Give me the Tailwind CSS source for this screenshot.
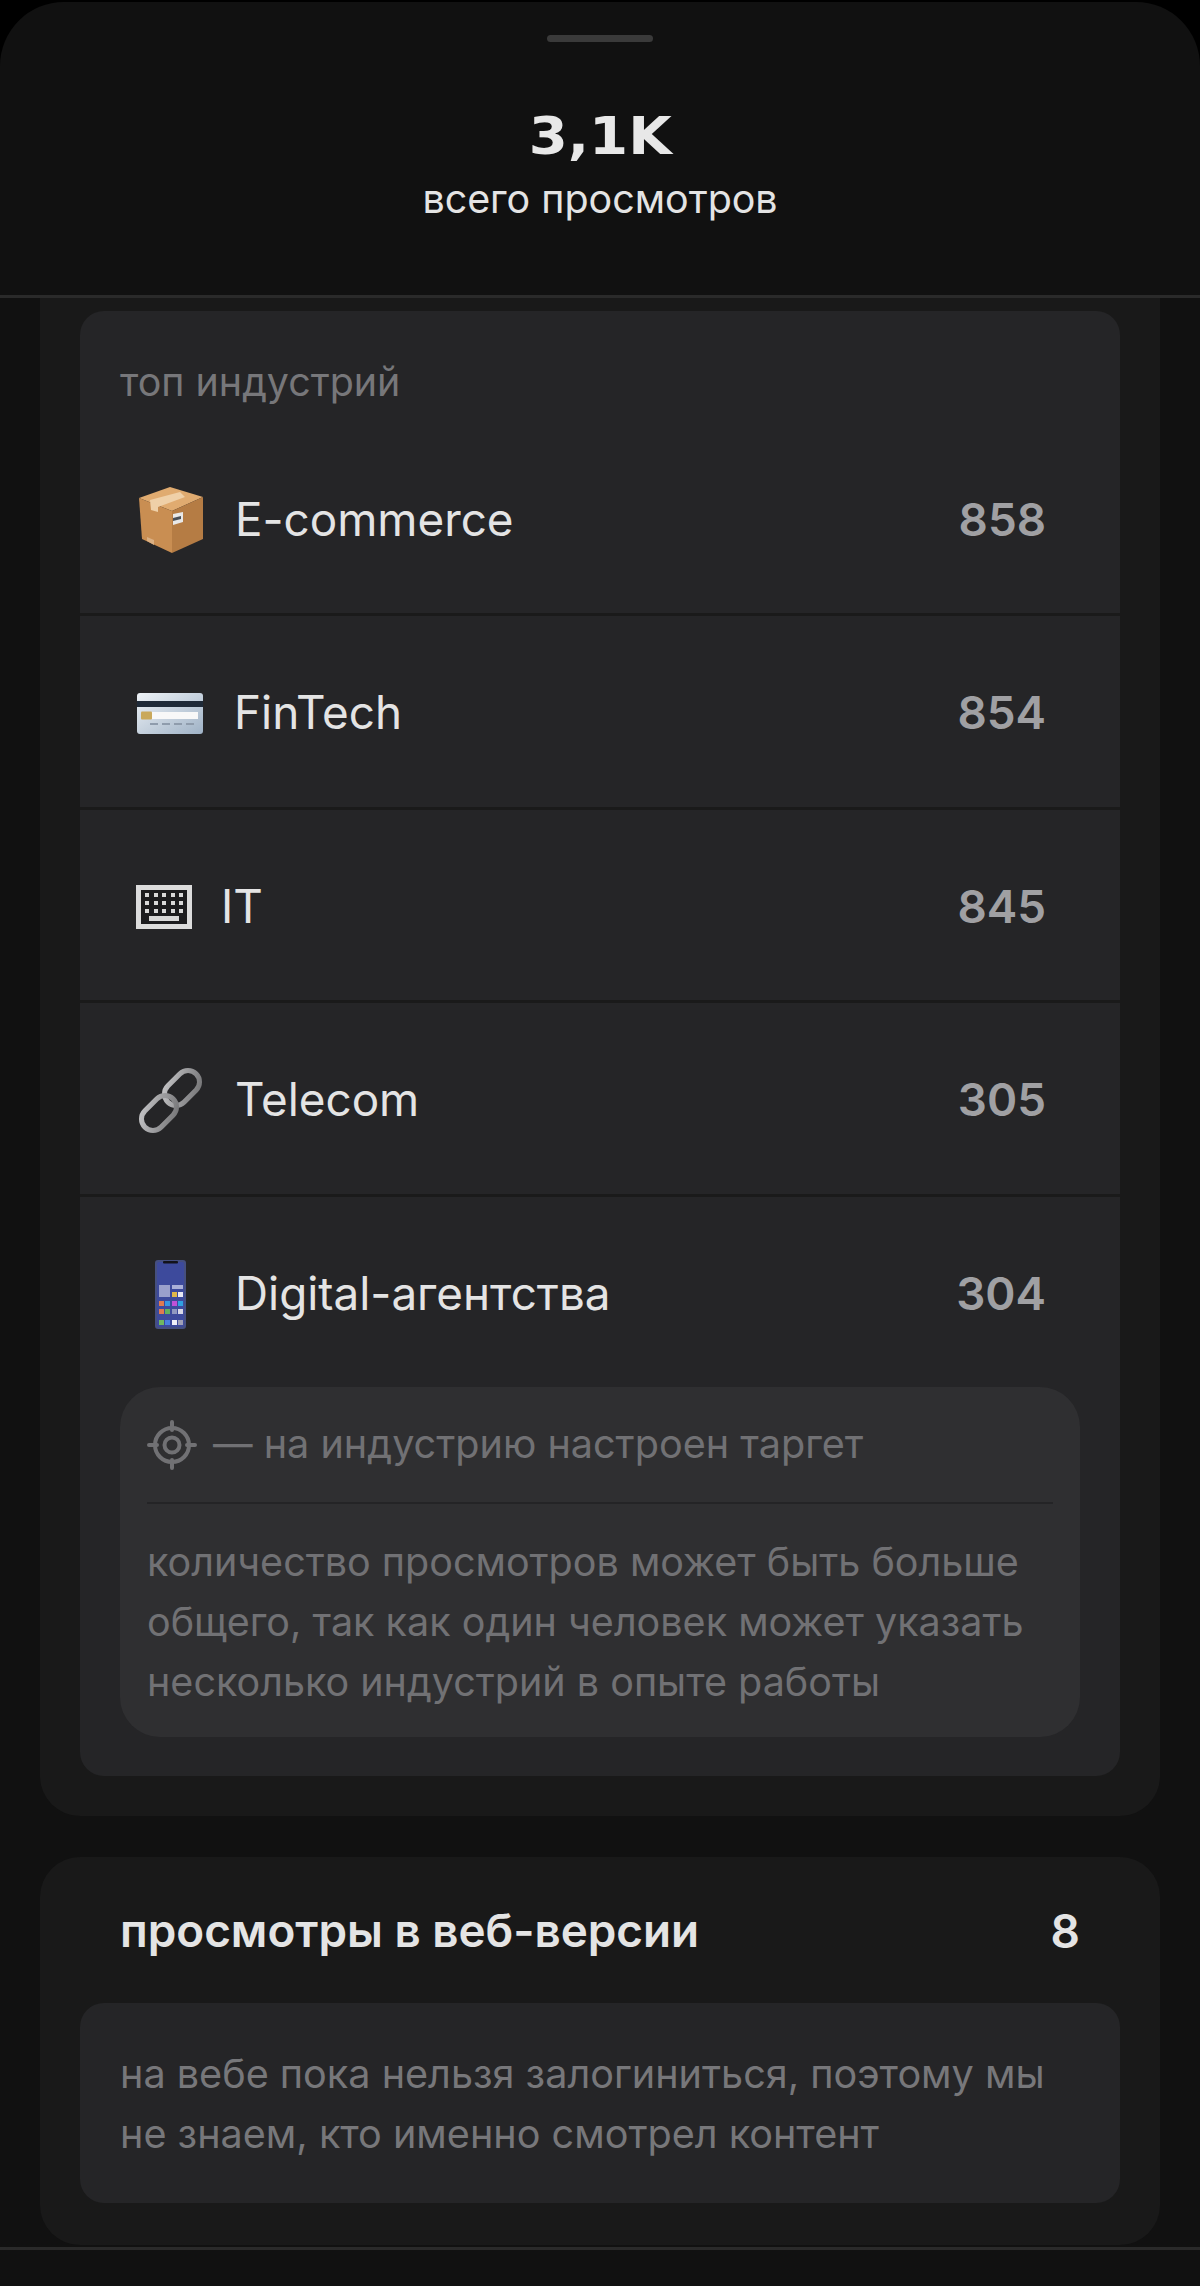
<!DOCTYPE html>
<html lang="ru">
  <head>
    <meta charset="UTF-8" />
    <title>Просмотры</title>
    <script src="https://cdn.jsdelivr.net/npm/@tailwindcss/browser@4"></script>
  </head>
  <body class="bg-black font-['Inter',sans-serif]">
    <div class="w-[1200px] h-[2286px] overflow-hidden pt-[2px]">
      <div class="h-full bg-[#111111] rounded-t-[64px] flex flex-col">
        <!-- header -->
        <div class="h-[296px] shrink-0 border-b-[3px] border-[#2a2a2a] flex flex-col items-center">
          <div class="mt-[33px] w-[106px] h-[7px] rounded-full bg-[#3a3a3a]"></div>
          <p class="mt-[66px] h-[56px] leading-[56px] text-[52px] font-bold text-[#e8e8e8] font-['DejaVu_Sans',sans-serif] scale-x-[1.08]">3,1K</p>
          <p class="mt-[10px] text-[39.4px] leading-[50px] text-[#e4e4e4]">всего просмотров</p>
        </div>

        <div class="px-[40px]">
          <!-- industries -->
          <div class="h-[1518px] bg-[#191919] rounded-b-[40px] px-[40px] pt-[13px]">
            <div class="h-[1465px] bg-[#252527] rounded-[24px] flex flex-col">
              <p class="mt-[49px] ml-[40px] h-[44px] leading-[44px] text-[39.4px] text-[#77777a]">топ индустрий</p>

              <div class="h-[212px] flex items-center pl-[58px] pr-[74px] pt-[23px] border-b-[3px] border-[#1a1a1a]">
                <svg class="w-[66px] h-[66px] mr-[31px] shrink-0" viewBox="0 0 66 66">
                  <path d="M1 11 32 0 65 10 34 24Z" fill="#e0ab70"/>
                  <path d="M1 11 34 24V66L4 52Z" fill="#c98e52"/>
                  <path d="M34 24 65 10V52L34 66Z" fill="#b57c44"/>
                  <path d="M12 13 42 5 47 10 20 20V25L13 23Z" fill="#efd0a8"/>
                  <path d="M35 27 45 25V35L35 38Z" fill="#e8e8e8"/>
                  <path d="M35 31 43 29V32L35 34Z" fill="#4a5058"/>
                  <path d="M9 50 16 53V58L9 54Z" fill="#dbb083"/>
                </svg>
                <span class="flex-1 text-[45.8px] text-[#e4e4e4]">E-commerce</span>
                <span class="text-[45.8px] font-semibold text-[#a0a0a3]">858</span>
              </div>

              <div class="h-[193.5px] flex items-center pl-[57px] pr-[74px] pt-[5px] border-b-[3px] border-[#1a1a1a]">
                <svg class="w-[66px] h-[41px] mr-[31px] shrink-0" viewBox="0 0 66 41">
                  <defs>
                    <linearGradient id="card" x1="0" y1="0" x2="1" y2="1">
                      <stop offset="0" stop-color="#eef2f6"/>
                      <stop offset="1" stop-color="#9fb2c6"/>
                    </linearGradient>
                  </defs>
                  <rect width="66" height="41" rx="3" fill="url(#card)"/>
                  <rect y="8" width="66" height="6" fill="#1f2a38"/>
                  <rect x="4" y="19" width="57" height="7" fill="#f8f8f8"/>
                  <rect x="4" y="18.5" width="11" height="8" rx="1" fill="#c9a85a"/>
                  <path d="M13 31H60" stroke="#8f9cac" stroke-width="2" stroke-dasharray="8 4"/>
                </svg>
                <span class="flex-1 text-[45.8px] text-[#e4e4e4]">FinTech</span>
                <span class="text-[45.8px] font-semibold text-[#a0a0a3]">854</span>
              </div>

              <div class="h-[193.5px] flex items-center pl-[56px] pr-[74px] pt-[5px] border-b-[3px] border-[#1a1a1a]">
                <svg class="w-[56px] h-[44px] mr-[29px] shrink-0" viewBox="0 0 56 44">
                  <rect x="2.5" y="2.5" width="51" height="39" fill="#1c1c1e" stroke="#dcdcdc" stroke-width="5"/>
                  <g fill="#d8d8d8">
                    <rect x="9" y="8" width="4" height="4"/><rect x="18" y="8" width="4" height="4"/><rect x="26" y="8" width="4" height="4"/><rect x="35" y="8" width="4" height="4"/><rect x="43" y="8" width="4" height="4"/>
                    <rect x="9" y="16" width="4" height="4"/><rect x="18" y="16" width="4" height="4"/><rect x="26" y="16" width="4" height="4"/><rect x="35" y="16" width="4" height="4"/><rect x="43" y="16" width="4" height="4"/>
                    <rect x="9" y="24" width="4" height="4"/><rect x="18" y="24" width="4" height="4"/><rect x="26" y="24" width="4" height="4"/><rect x="35" y="24" width="4" height="4"/><rect x="43" y="24" width="4" height="4"/>
                    <rect x="13" y="31" width="30" height="5"/>
                  </g>
                </svg>
                <span class="flex-1 text-[45.8px] text-[#e4e4e4]">IT</span>
                <span class="text-[45.8px] font-semibold text-[#a0a0a3]">845</span>
              </div>

              <div class="h-[193.5px] flex items-center pl-[58px] pr-[74px] pt-[5px] border-b-[3px] border-[#1a1a1a]">
                <svg class="w-[66px] h-[68px] mr-[31px] shrink-0 overflow-visible" viewBox="0 0 66 68" fill="none">
                  <defs>
                    <linearGradient id="chain" x1="0" y1="0" x2="1" y2="1">
                      <stop offset="0" stop-color="#c4c4c6"/>
                      <stop offset="1" stop-color="#747476"/>
                    </linearGradient>
                  </defs>
                  <g transform="rotate(-45 44 21)"><rect x="24" y="9.5" width="40" height="23" rx="11.5" stroke="url(#chain)" stroke-width="5"/></g>
                  <g transform="rotate(-45 21 46)"><rect x="1" y="34.5" width="40" height="23" rx="11.5" stroke="url(#chain)" stroke-width="5"/></g>
                </svg>
                <span class="flex-1 text-[45.8px] text-[#e4e4e4]">Telecom</span>
                <span class="text-[45.8px] font-semibold text-[#a0a0a3]">305</span>
              </div>

              <div class="h-[190px] flex items-center pl-[58px] pr-[74px] pt-[5px]">
                <svg class="w-[66px] h-[69px] mr-[31px] shrink-0" viewBox="0 0 66 69">
                  <rect x="17" y="0" width="31" height="69" rx="3" fill="#454f80"/>
                  <rect x="19" y="2" width="27" height="65" rx="2" fill="#3d4a9c"/>
                  <rect x="25" y="1" width="15" height="2.5" rx="1" fill="#12121a"/>
                  <rect x="21" y="25" width="11" height="12" fill="#9aa0cc"/>
                  <rect x="34" y="25" width="11" height="4" fill="#aab0d8"/>
                  <rect x="34" y="32" width="5" height="5" fill="#e0b84a"/><rect x="40" y="32" width="5" height="5" fill="#e8e8f4"/>
                  <rect x="21" y="41" width="5" height="5" fill="#e07a50"/><rect x="27" y="41" width="5" height="5" fill="#3a96e0"/><rect x="34" y="41" width="5" height="5" fill="#c050d8"/><rect x="40" y="41" width="5" height="5" fill="#30a0e0"/>
                  <rect x="21" y="49" width="5" height="5" fill="#e07a50"/><rect x="27" y="49" width="5" height="5" fill="#60b060"/><rect x="34" y="49" width="5" height="5" fill="#9098c0"/><rect x="40" y="49" width="5" height="5" fill="#d8d8e8"/>
                  <rect x="21" y="60" width="5" height="5" fill="#70b860"/><rect x="27" y="60" width="5" height="5" fill="#4a80e0"/><rect x="34" y="60" width="5" height="5" fill="#f0f0f8"/><rect x="40" y="60" width="5" height="5" fill="#a0a0b8"/>
                </svg>
                <span class="flex-1 text-[45.8px] text-[#e4e4e4]">Digital-агентства</span>
                <span class="text-[45.8px] font-semibold text-[#a0a0a3]">304</span>
              </div>

              <!-- note -->
              <div class="mx-[40px] h-[350px] bg-[#2f2f31] rounded-[40px] px-[27px]">
                <div class="h-[117px] flex items-center pt-[2px] border-b-[2px] border-[#242426] text-[39.6px] text-[#717174]">
                  <svg class="w-[50px] h-[50px] mr-[16px] shrink-0" viewBox="0 0 50 50" fill="none" stroke="#717174">
                    <circle cx="25" cy="25" r="17" stroke-width="4"/>
                    <circle cx="25" cy="25" r="7.5" stroke-width="4"/>
                    <path d="M25 2v8M25 40v8M2 25h8M40 25h8" stroke-width="4" stroke-linecap="round"/>
                  </svg>
                  <span>— на индустрию настроен таргет</span>
                </div>
                <p class="mt-[28px] text-[39.5px] leading-[60px] text-[#717174]">количество просмотров может быть больше общего, так как один человек может указать несколько индустрий в опыте работы</p>
              </div>
            </div>
          </div>

          <!-- web -->
          <div class="mt-[41px] h-[388px] bg-[#191919] rounded-[40px] px-[40px] flex flex-col">
            <div class="h-[146px] px-[40px] flex items-center justify-between pt-[3px]">
              <span class="text-[45.8px] font-semibold text-[#e4e4e4]">просмотры в веб-версии</span>
              <span class="text-[46px] font-semibold text-[#e4e4e4]">8</span>
            </div>
            <div class="h-[200px] bg-[#252527] rounded-[24px] px-[40px] pt-[41px]">
              <p class="text-[39.6px] leading-[60px] text-[#77777a]">на вебе пока нельзя залогиниться, поэтому мы не знаем, кто именно смотрел контент</p>
            </div>
          </div>
        </div>

        <div class="mt-[2px] border-t-[3px] border-[#2a2a2a]"></div>
      </div>
    </div>
  </body>
</html>
